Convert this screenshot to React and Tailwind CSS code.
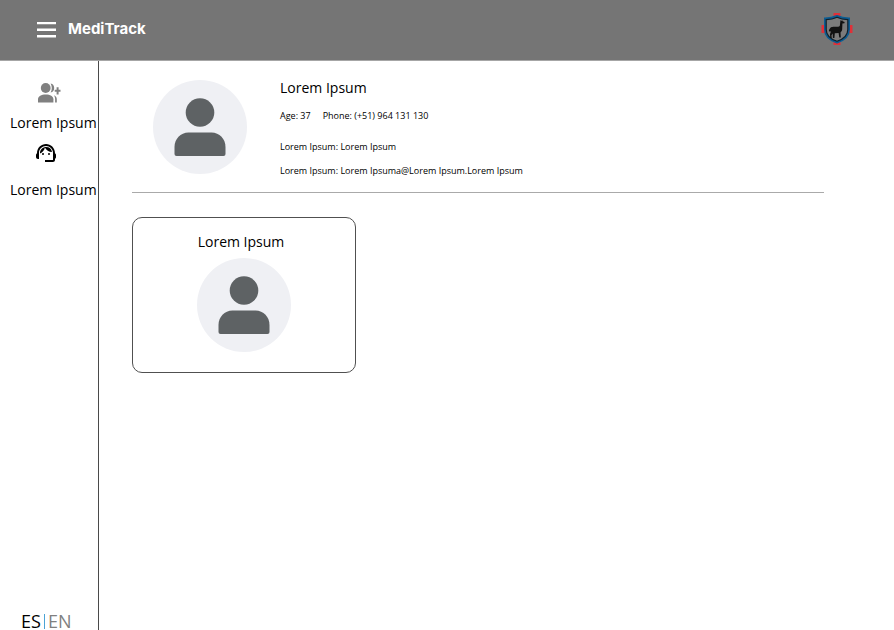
import { MdSupportAgent } from "react-icons/md";

function Avatar() {
  return (
    <svg viewBox="0 0 94 94" className="size-[94px] shrink-0" role="img" aria-label="Avatar">
      <circle cx="47" cy="47" r="47" fill="#eff0f4" />
      <circle cx="47" cy="32.5" r="14.3" fill="#5e6264" />
      <path
        d="M21.500 67c0-8 6-14.500 14-14.500h23c8 0 14 6.500 14 14.500v7a2 2 0 0 1-2 2h-47a2 2 0 0 1-2-2z"
        fill="#5e6264"
      />
    </svg>
  );
}

function AddUserIcon() {
  return (
    <svg viewBox="0 0 24 20" className="h-5 w-6" fill="#808080" aria-hidden="true">
      <circle cx="8.700" cy="5" r="4.900" />
      <path d="M1 19.500v-3.300c0-2.700 3.200-4.700 7.700-4.700s7.700 2 7.700 4.700v3.300z" />
      <path d="M13.600.4c2.400.3 3.600 2.300 3.600 4.600s-1.200 4.300-3.600 4.600c1.600-2.800 1.600-6.400 0-9.200z" />
      <path d="M16.800 12.200c2.300.8 3 2.300 3 4v3.300h-1.700v-3.300c0-1.700-.4-2.900-1.300-4z" />
      <path d="M19.600 4.200h2v2.500h1.900v2h-1.900v2.700h-2V8.700h-1.900v-2h1.900z" />
    </svg>
  );
}

function ShieldLogo() {
  return (
    <svg viewBox="0 0 32 34" className="h-[34px] w-8" role="img" aria-label="Clinic crest">
      <path d="M12.500 1h7v32h-7zM.5 13h31v8H.5z" fill="#e03038" />
      <path
        d="M16 4C12.500 5.800 8 6.500 4 6.500v11c0 6.500 4.500 10.500 12 13 7.500-2.500 12-6.500 12-13v-11c-4 0-8.500-.7-12-2.500z"
        fill="#7b7b7b"
        stroke="#0b5c92"
        strokeWidth="2"
      />
      <path
        d="M16 5.200C12.500 7 8.500 7.600 5.200 7.600v9.900c0 5.800 4 9.500 10.800 11.800 6.800-2.300 10.800-6 10.800-11.800V7.600c-3.300 0-7.300-.6-10.800-2.400z"
        fill="none"
        stroke="#10202c"
        strokeWidth="1.200"
      />
      <path
        d="M19.500 8l.8 1 .8-1 .5 1.300 2 .7-.2 1.300-2 .3-.2 5.400c0 1.700-.8 2.700-1.700 3.500l.3 5h-1.500l-.7-4.500-3.800.2-.4 4.800h-1.500l-.2-4.500-1.200 1.700.2 2.800H9.200l-.2-4 1-2.500c-2 .2-2.700-.7-1.600-2.300.8-1.700 2-2.500 4-2.500h4.700c1.600 0 1.900-1 1.900-2.500z"
        fill="#111"
      />
    </svg>
  );
}

function NavItem({ icon, gap }) {
  return (
    <a href="#" className={`flex flex-col ${gap}`}>
      <span className="flex h-6 w-full items-center pl-6">{icon}</span>
      <span className="whitespace-nowrap text-sm leading-5">Lorem Ipsum</span>
    </a>
  );
}

export default function App() {
  return (
    <div className="flex min-h-screen flex-col bg-white font-['Open_Sans',sans-serif] text-black">
      <header className="flex h-[61px] items-center justify-between border-b border-[#a6a6a6] bg-[#757575] pr-[41px] pb-[2px] pl-9">
        <div className="flex items-center gap-3">
          <button type="button" aria-label="Open menu" className="flex h-5 w-5 items-center">
            <svg viewBox="0 0 20 18" className="h-[18px] w-5" fill="#fff" aria-hidden="true">
              <path d="M1 2h19v2.300H1zM1 8.500h19V11H1zM1 15h19v2.500H1z" />
            </svg>
          </button>
          <h1 className="font-['Inter',sans-serif] text-[15px] leading-5 font-bold text-white">MediTrack</h1>
        </div>
        <ShieldLogo />
      </header>

      <div className="flex grow">
        <aside className="flex w-[99px] shrink-0 flex-col border-r border-[#4a4a4a] pt-5 pl-[10px]">
          <nav className="flex flex-col gap-2">
            <NavItem
              icon={<span className="pl-[3px]"><AddUserIcon /></span>}
              gap="gap-2"
            />
            <NavItem
              icon={<MdSupportAgent className="size-6" aria-hidden="true" />}
              gap="gap-[15px]"
            />
          </nav>
          <div className="mt-auto flex items-center pl-[11px] text-lg leading-[18px]">
            <button type="button">ES</button>
            <span className="mx-[3px] h-[15px] w-px bg-[#4ba3d5]" />
            <button type="button" className="text-[#808080]">EN</button>
          </div>
        </aside>

        <main className="grow pr-[70px] pl-[33px]">
          <section className="flex gap-[33px] border-b border-[#aaa] pt-[19px] pb-[13px] pl-[21px]">
            <Avatar />
            <div className="flex flex-col text-[9px] leading-4">
              <h2 className="text-sm leading-4">Lorem Ipsum</h2>
              <p className="mt-3 flex gap-3">
                <span>Age: 37</span>
                <span>Phone: (+51) 964 131 130</span>
              </p>
              <p className="mt-[15px]">Lorem Ipsum: Lorem Ipsum</p>
              <p className="mt-2">Lorem Ipsum: Lorem Ipsuma@Lorem Ipsum.Lorem Ipsum</p>
            </div>
          </section>

          <article className="mt-6 flex w-56 flex-col items-center gap-[6px] rounded-[10px] border border-[#505050] pt-[14px] pb-5">
            <h3 className="pr-[6px] text-sm leading-5">Lorem Ipsum</h3>
            <Avatar />
          </article>
        </main>
      </div>
    </div>
  );
}
